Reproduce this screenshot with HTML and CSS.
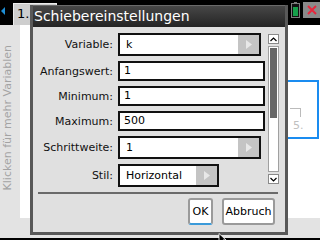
FILE: index.html
```html
<!DOCTYPE html>
<html>
<head>
<meta charset="utf-8">
<link rel="stylesheet" href="styles.css">
</head>
<body>
<div class="screen">
  <header class="topbar">
    <span class="tab-arrow"></span>
    <span class="tab">1.</span>
    <span class="spacer"></span>
    <span class="battery"><span class="battery-fill"></span></span>
    <span class="close">
      <svg width="10" height="10" viewBox="0 0 10 10"><path d="M1 1L9 9M9 1L1 9" stroke="#e8263c" stroke-width="2" fill="none"/></svg>
    </span>
  </header>
  <main class="workspace">
    <aside class="sidebar"><span class="vtext">Klicken für mehr Variablen</span></aside>
    <section class="page">
      <div class="math-box">
        <span class="bracket"></span>
        <span class="num">5.</span>
      </div>
    </section>
  </main>

  <div class="dialog">
    <div class="titlebar">Schiebereinstellungen</div>
    <div class="content">
      <div class="form">
        <span class="label">Variable:</span>
        <div class="dropdown"><span class="value">k</span><span class="arrow"><svg width="6" height="9" viewBox="0 0 6 9"><path d="M0 0L6 4.5L0 9Z" fill="#e8e8e8"/></svg></span></div>
        <span class="label">Anfangswert:</span>
        <div class="field">1</div>
        <span class="label">Minimum:</span>
        <div class="field">1</div>
        <span class="label">Maximum:</span>
        <div class="field">500</div>
        <span class="label">Schrittweite:</span>
        <div class="dropdown"><span class="value">1</span><span class="arrow"><svg width="6" height="9" viewBox="0 0 6 9"><path d="M0 0L6 4.5L0 9Z" fill="#e8e8e8"/></svg></span></div>
        <span class="label">Stil:</span>
        <div class="dropdown short"><span class="value">Horizontal</span><span class="arrow"><svg width="6" height="9" viewBox="0 0 6 9"><path d="M0 0L6 4.5L0 9Z" fill="#e8e8e8"/></svg></span></div>
      </div>
      <div class="scrollbar">
        <span class="sb-btn"><svg width="7" height="5" viewBox="0 0 7 5"><path d="M0.5 4L3.5 1L6.5 4" stroke="#000" stroke-width="1.2" fill="none"/></svg></span>
        <span class="sb-track"><span class="sb-thumb"></span></span>
        <span class="sb-btn"><svg width="7" height="5" viewBox="0 0 7 5"><path d="M0.5 1L3.5 4L6.5 1" stroke="#000" stroke-width="1.2" fill="none"/></svg></span>
      </div>
    </div>
    <div class="separator"></div>
    <div class="buttons">
      <button class="btn ok">OK</button>
      <button class="btn cancel">Abbruch</button>
    </div>
  </div>

  <svg class="cursor" width="9" height="12" viewBox="0 0 9 12"><path d="M1 0.5L1 10L3.5 7.5L5.5 11.5L7 10.8L5 7H8Z" fill="#000" stroke="#fff" stroke-width="0.8"/></svg>
</div>
</body>
</html>
```
FILE: styles.css
```css
* { box-sizing: border-box; margin: 0; padding: 0; }
html, body { width: 320px; height: 240px; overflow: hidden; }
body { background: #000; font-family: "DejaVu Sans", sans-serif; color: #111; }

.screen { position: relative; width: 320px; height: 240px; display: flex; flex-direction: column; }

.topbar { height: 25px; flex-shrink: 0; background: #000; display: flex; align-items: flex-start; }
.tab-arrow { width: 0; height: 0; margin: 7px 0 0 1px; border-top: 4px solid transparent; border-bottom: 4px solid transparent; border-right: 4px solid #1e8fd6; }
.tab { margin: 3px 0 0 8px; width: 44px; height: 22px; background: #cecece; border: 1px solid #ececec; border-bottom: 0; font-size: 13px; line-height: 20px; padding-left: 3px; color: #000; }
.spacer { flex: 1; }
.battery { position: relative; width: 9px; height: 15px; margin-top: 3px; border: 1px solid #7c7c7c; background: #111; padding: 3px 1px 1px; }
.battery::before { content: ""; position: absolute; left: 2px; top: -2px; width: 3px; height: 2px; background: #7c7c7c; }
.battery-fill { display: block; height: 100%; background: #16a04a; }
.close { width: 17px; height: 16px; margin: 2px 0 0 3px; background: #8a8a8a; display: flex; align-items: center; justify-content: center; }

.workspace { height: 213px; flex-shrink: 0; background: #e3e3e3; display: flex; align-items: flex-start; }
.sidebar { width: 20px; align-self: stretch; padding-top: 20px; }
.vtext { display: block; writing-mode: vertical-rl; transform: rotate(180deg); font-size: 11px; line-height: 14px; color: #a3a3a3; white-space: nowrap; margin-left: 1px; }
.page { position: relative; width: 300px; height: 193px; background: #fff; }
.math-box { position: absolute; left: 250px; top: 55px; width: 49px; height: 59px; border: 2px solid #1a8cf0; }
.bracket { position: absolute; left: 18px; top: 26px; width: 11px; height: 9px; border-top: 1px solid #bbb; border-right: 1px solid #bbb; }
.num { position: absolute; left: 21px; top: 37px; font-size: 11px; color: #c0c0c0; }

.dialog { position: absolute; left: 30px; top: 5px; width: 258px; height: 230px; background: #e0e0e0; border: 3px solid #585858; border-top: 0; display: flex; flex-direction: column; }
.titlebar { height: 22px; flex-shrink: 0; background: linear-gradient(#474747, #242424); border-top: 1px solid #6a6a6a; color: #fff; font-size: 14px; line-height: 21px; padding-left: 1px; }

.content { display: flex; align-items: flex-start; padding-top: 6px; }
.form { display: grid; grid-template-columns: 80px 147px; column-gap: 5px; row-gap: 5px; align-items: center; }
.label { text-align: right; font-size: 11px; color: #111; }
.field { width: 147px; height: 20px; border: 2px solid #111; background: #fff; font-size: 11px; line-height: 16px; padding-left: 4px; color: #000; }
.dropdown { width: 143px; height: 23px; border: 2px solid #111; background: #fff; display: flex; font-size: 11px; color: #000; }
.dropdown.short { width: 101px; }
.dropdown .value { flex: 1; padding-left: 6px; line-height: 19px; }
.dropdown .arrow { width: 21px; background: #c4c4c4; display: flex; align-items: center; justify-content: center; }

.scrollbar { width: 11px; height: 150px; margin: 1px 0 0 3px; display: flex; flex-direction: column; gap: 2px; }
.sb-btn { height: 10px; flex-shrink: 0; border: 1px solid #8a8a8a; background: #fff; display: flex; align-items: center; justify-content: center; }
.sb-track { flex: 1; border: 1px solid #a0a0a0; background: #fff; padding: 1px; }
.sb-thumb { display: block; height: 70px; background: #666; }

.separator { height: 2px; flex-shrink: 0; background: #6a6a6a; margin: 5px 7px 0 5px; }
.buttons { display: flex; justify-content: flex-end; gap: 9px; margin-top: 4px; padding-right: 10px; }
.btn { height: 27px; border: 2px solid #9a9a9a; border-radius: 3px; background: #fff; font-family: "DejaVu Sans", sans-serif; font-size: 11px; color: #000; line-height: 23px; }
.btn.ok { width: 25px; border-bottom-color: #3a9ad9; }
.btn.cancel { width: 53px; }

.cursor { position: absolute; left: 218px; top: 233px; }
```
